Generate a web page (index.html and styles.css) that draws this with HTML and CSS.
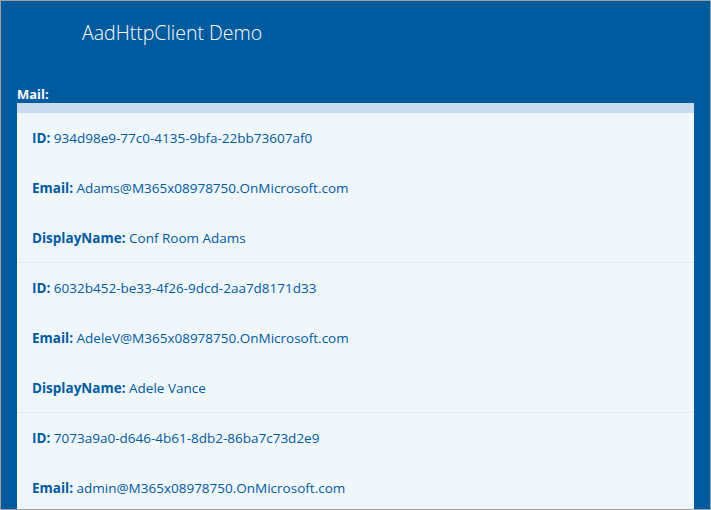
FILE: index.html
```html
<!DOCTYPE html>
<html>
<head>
<meta charset="utf-8">
<link rel="stylesheet" href="styles.css">
</head>
<body>
<div class="frame">
  <div class="title">AadHttpClient Demo</div>
  <div class="label">Mail:</div>
  <div class="panel">
    <div class="strip"></div>
    <div class="item">
      <div class="line"><b>ID:</b> 934d98e9-77c0-4135-9bfa-22bb73607af0</div>
      <div class="line"><b>Email:</b> Adams@M365x08978750.OnMicrosoft.com</div>
      <div class="line"><b>DisplayName:</b> Conf Room Adams</div>
    </div>
    <div class="item">
      <div class="line"><b>ID:</b> 6032b452-be33-4f26-9dcd-2aa7d8171d33</div>
      <div class="line"><b>Email:</b> AdeleV@M365x08978750.OnMicrosoft.com</div>
      <div class="line"><b>DisplayName:</b> Adele Vance</div>
    </div>
    <div class="item">
      <div class="line"><b>ID:</b> 7073a9a0-d646-4b61-8db2-86ba7c73d2e9</div>
      <div class="line"><b>Email:</b> admin@M365x08978750.OnMicrosoft.com</div>
      <div class="line"><b>DisplayName:</b> MOD Administrator</div>
    </div>
  </div>
</div>
</body>
</html>
```
FILE: styles.css
```css
html, body {
  margin: 0;
  padding: 0;
  height: 100%;
  overflow: hidden;
}
body {
  font-family: "Open Sans", "Noto Sans", sans-serif;
}
.frame {
  box-sizing: border-box;
  height: 510px;
  border: 1px solid #a0a0a0;
  background: #005a9e;
  padding: 0 16px;
  overflow: hidden;
}
.title {
  font-weight: 300;
  font-size: 19.5px;
  line-height: 28px;
  color: #ffffff;
  padding: 18px 0 0 65px;
  height: 66px;
}
.label {
  color: #ffffff;
  font-weight: 700;
  font-size: 13px;
  line-height: 18px;
}
.panel {
  background: #eff6fc;
}
.strip {
  height: 10px;
  background: #c7dcf0;
}
.item {
  box-sizing: border-box;
  height: 150px;
  border-bottom: 1px solid #e3eaf1;
  box-shadow: 0 1px 0 #f3f7fb;
}
.line {
  padding: 16px 0 16px 15px;
  line-height: 18px;
  font-size: 13.5px;
  color: #005a9e;
  white-space: nowrap;
}
.line b {
  font-weight: 700;
}
```
